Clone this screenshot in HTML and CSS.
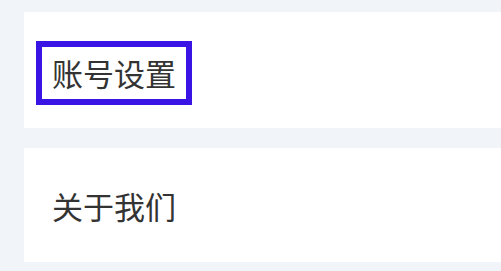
FILE: index.html
```html
<!DOCTYPE html>
<html lang="zh">
<head>
<meta charset="utf-8">
<link rel="stylesheet" href="styles.css">
</head>
<body>
<div class="page">
  <div class="card card-first">
    <div class="highlight"><span class="label">账号设置</span></div>
  </div>
  <div class="card card-second">
    <span class="label">关于我们</span>
  </div>
</div>
</body>
</html>
```
FILE: styles.css
```css
html, body {
  margin: 0;
  padding: 0;
  background: #f1f5f9;
}
.page {
  width: 501px;
  height: 271px;
  box-sizing: border-box;
  padding: 12px 0 0 24px;
  display: flex;
  flex-direction: column;
  gap: 20px;
  font-family: "Noto Sans CJK SC", "Noto Sans", sans-serif;
}
.card {
  background: #ffffff;
  display: flex;
  align-items: center;
}
.card-first {
  height: 116px;
  padding-left: 12px;
}
.card-second {
  height: 114px;
  padding-left: 28px;
}
.highlight {
  border: 6px solid #3a14e4;
  height: 52px;
  box-sizing: content-box;
  padding: 0 10px;
  display: flex;
  align-items: center;
  margin-top: 5px;
}
.label {
  font-size: 31px;
  line-height: 1;
  color: #333333;
}
```
